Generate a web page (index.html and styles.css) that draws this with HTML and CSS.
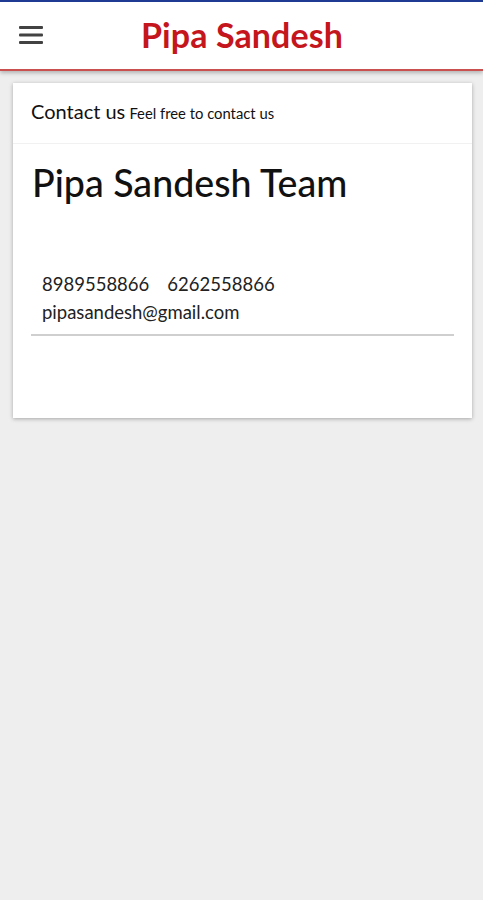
FILE: index.html
```html
<!DOCTYPE html>
<html lang="en">
<head>
<meta charset="UTF-8" />
<meta name="viewport" content="width=device-width, initial-scale=1" />
<title>Pipa Sandesh - Contact us</title>
<link rel="stylesheet" href="styles.css">
</head>
<body>
  <header class="topbar">
    <button class="menu-btn" aria-label="Menu">
      <svg width="24" height="20" viewBox="0 0 24 20">
        <rect x="0" y="1" width="24" height="3" rx="1" fill="#424242"/>
        <rect x="0" y="8.5" width="24" height="3" rx="1" fill="#424242"/>
        <rect x="0" y="16" width="24" height="3" rx="1" fill="#424242"/>
      </svg>
    </button>
    <h1 class="brand">Pipa Sandesh</h1>
  </header>

  <main class="content">
    <section class="card">
      <div class="card-head">
        <span class="card-title">Contact us</span>
        <span class="card-sub">Feel free to contact us</span>
      </div>
      <div class="card-body">
        <h2 class="team">Pipa Sandesh Team</h2>
        <div class="contact">
          <p class="phones"><span>8989558866</span><span>6262558866</span></p>
          <p class="email">pipasandesh@gmail.com</p>
        </div>
        <hr class="divider" />
      </div>
    </section>
  </main>
</body>
</html>
```

FILE: styles.css
```css
/* Base */
* {
  box-sizing: border-box;
}
body {
  margin: 0;
  background: #eeeeee;
  font-family: 'Lato', 'Open Sans', sans-serif;
  color: #111;
  min-height: 100vh;
  border-top: 2px solid #1f3a93;
}
/* Header */
.topbar {
  height: 69px;
  background: #fff;
  border-bottom: 2px solid #c9504f;
  box-shadow: 0 2px 4px rgba(0, 0, 0, 0.25);
  display: flex;
  align-items: center;
  padding: 0 0 0 19px;
}
.menu-btn {
  background: none;
  border: none;
  padding: 0;
  width: 24px;
  height: 20px;
  display: flex;
  margin-top: -1px;
}
.brand {
  margin: -2px 0 0 98px;
  font-size: 34px;
  font-weight: 700;
  color: #c4161c;
  letter-spacing: 0.1px;
}
/* Card */
.content {
  padding: 12px 11px 0 13px;
}
.card {
  background: #fff;
  box-shadow: 0 1px 4px rgba(0, 0, 0, 0.3);
  height: 335px;
}
.card-head {
  padding: 16px 18px 0;
  height: 61px;
  border-bottom: 1px solid #f1f1f1;
}
.card-title {
  font-size: 20px;
}
.card-sub {
  font-size: 14.8px;
}
.card-body {
  padding: 0 18px;
}
.team {
  margin: 17px 0 0 1px;
  font-size: 37.6px;
  font-weight: 500;
  line-height: 44px;
}
.contact {
  padding: 65px 0 0 11px;
  font-size: 18.5px;
  color: #222;
}
.contact p {
  margin: 0;
  line-height: 28px;
}
.phones span + span {
  margin-left: 18px;
}
.divider {
  border: none;
  border-top: 2px solid #cfcfcf;
  margin: 8px 0 0;
}
```
